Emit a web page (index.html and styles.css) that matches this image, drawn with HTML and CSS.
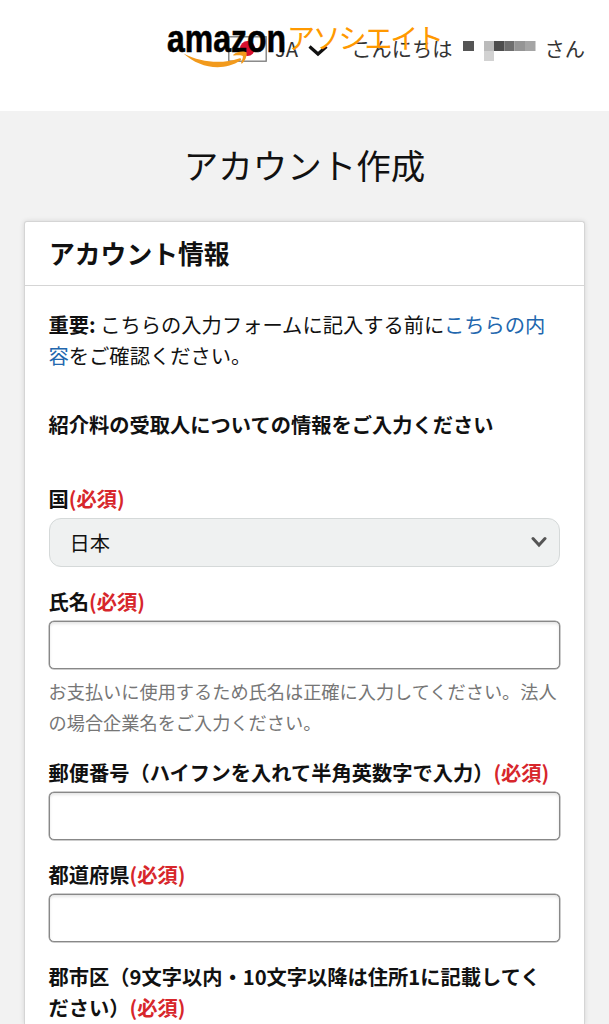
FILE: index.html
```
<!DOCTYPE html>
<html lang="ja">
<head>
    <meta charset="UTF-8">
    <meta name="viewport" content="width=device-width, initial-scale=1.0">
    <title>アカウント作成</title>
    <link rel="stylesheet" href="styles.css">
</head>
<body>
    <header class="header">
        <div class="user-menu">
            <svg class="flag" width="39" height="26" viewBox="0 0 39 26">
                <rect x="0.8" y="0.8" width="37.4" height="24.4" fill="#fff" stroke="#777" stroke-width="1.3"/>
                <circle cx="19.5" cy="12.5" r="7.5" fill="#d80f2f"/>
            </svg>
            <span class="lang">JA</span>
            <svg class="arrow" width="20" height="12" viewBox="0 0 20 12">
                <path d="M1.500 1.500l8.500 7.500 8.500-7.500" fill="none" stroke="#111" stroke-width="3.200"/>
            </svg>
            <span class="greeting">こんにちは</span>
            <svg class="masked" width="73" height="22" viewBox="0 0 73 22">
                <path fill="#555" d="M0 1h11v10H0z"/>
                <path fill="#bbb" d="M21 1h10v10H21z"/>
                <path fill="#d2d2d2" d="M21 11h10v10H21z"/>
                <path fill="#4d4d4d" d="M31 1h10.500v10H31z"/>
                <path fill="#6e6e6e" d="M41.500 1h10v10h-10z"/>
                <path fill="#959595" d="M51.500 1h11v10h-11z"/>
                <path fill="#a5a5a5" d="M62 1h10.500v10H62z"/>
            </svg>
            <span class="san">さん</span>
        </div>
        <a class="logo" href="#">
            <svg class="logo-mark" width="120" height="56" viewBox="0 0 120 56">
                <text class="logo-text" x="1" y="35.500" textLength="119" lengthAdjust="spacingAndGlyphs">amazon</text>
                <path fill="#f29a1c" d="M17.500 37.500C36 47 56 48 73 42.500c2-.8 3 .8 1.500 2C57 56 33 52 17.500 37.500z"/>
                <path fill="#f29a1c" d="M67.500 38.500c3-3 11-4 13-2 .8 3-1.500 9-4.500 11-1 .3-1-.4-.7-1.200 1-2.500 2-5 1.500-6.200-1-1.200-5-1-8.500-.6-1 .1-1.500-.4-.8-1z"/>
            </svg>
            <span class="logo-sub">アソシエイト</span>
        </a>
    </header>

    <main class="container">
        <h1>アカウント作成</h1>
        <form class="card">
            <h2>アカウント情報</h2>
            <div class="card-body">
                <p class="notice"><b>重要:</b> こちらの入力フォームに記入する前に<a href="#">こちらの内容</a>をご確認ください。</p>
                <h3>紹介料の受取人についての情報をご入力ください</h3>

                <div class="field">
                    <label for="country">国<span class="required">(必須)</span></label>
                    <div class="select-box">
                        <select id="country">
                            <option>日本</option>
                        </select>
                        <svg class="select-arrow" width="16" height="12" viewBox="0 0 16 12">
                            <path d="M2 2.500l6 6.500 6-6.500" fill="none" stroke="#555" stroke-width="3" stroke-linecap="round"/>
                        </svg>
                    </div>
                </div>
                <div class="field">
                    <label for="name">氏名<span class="required">(必須)</span></label>
                    <input type="text" id="name">
                    <p class="help">お支払いに使用するため氏名は正確に入力してください。法人の場合企業名をご入力ください。</p>
                </div>
                <div class="field">
                    <label for="zip">郵便番号（ハイフンを入れて半角英数字で入力）<span class="required">(必須)</span></label>
                    <input type="text" id="zip">
                </div>
                <div class="field">
                    <label for="pref">都道府県<span class="required">(必須)</span></label>
                    <input type="text" id="pref">
                </div>
                <div class="field">
                    <label for="city">郡市区（9文字以内・10文字以降は住所1に記載してください）<span class="required">(必須)</span></label>
                </div>
            </div>
        </form>
    </main>
</body>
</html>
```
FILE: styles.css
```
* {
    box-sizing: border-box;
}
body {
    height: 1024px;
    overflow: hidden;
    margin: 0;
    font-family: "Noto Sans CJK JP", sans-serif;
    font-size: 20.25px;
    line-height: 31px;
    color: #111;
    background-color: #f2f2f2;
}
h1, h2, h3, p {
    margin: 0;
}
a {
    color: #2267ae;
    text-decoration: none;
}
.header {
    position: relative;
    height: 111px;
    background-color: #fff;
}
.user-menu {
    display: flex;
    align-items: center;
    padding: 33px 0 0 228px;
    color: #333;
}
.flag {
    flex: none;
}
.lang {
    margin-left: 8px;
}
.arrow {
    flex: none;
    margin: 4px 0 0 10px;
}
.greeting {
    margin-left: 23px;
}
.masked {
    flex: none;
    margin: 4px 0 0 11px;
}
.san {
    margin-left: 8px;
}
.logo {
    position: absolute;
    top: 16px;
    left: 166px;
    display: flex;
}
.logo-text {
    font-family: "Liberation Sans", Arial, sans-serif;
    font-weight: bold;
    font-size: 39px;
    fill: #000;
    stroke: #000;
    stroke-width: 0.6px;
}
.logo-sub {
    margin: 6px 0 0 1px;
    font-size: 28px;
    font-weight: 400;
    letter-spacing: -2.2px;
    white-space: nowrap;
    color: #ff9900;
}
.container {
    padding: 28px 24px 0;
}
h1 {
    margin-bottom: 32px;
    font-size: 34.5px;
    font-weight: 400;
    line-height: 50px;
    text-align: center;
}
.card {
    height: 803px;
    background-color: #fff;
    border: 1px solid #d5d5d5;
    border-bottom: none;
    border-radius: 3px 3px 0 0;
    box-shadow: 0 0 5px rgba(0, 0, 0, 0.12);
}
h2 {
    height: 64px;
    padding: 0 24px;
    border-bottom: 1px solid #d5d5d5;
    font-size: 25.800px;
    line-height: 61px;
}
.card-body {
    padding: 23px 24px 0 23.5px;
}
.notice {
    font-size: 20.3px;
}
h3 {
    margin: 38px 0 43px;
    font-size: 20.25px;
}
.field {
    margin-bottom: 19px;
}
label {
    display: block;
    padding-right: 4px;
    margin-bottom: 4px;
    font-weight: bold;
}
.required {
    color: #d7262b;
}
input, select {
    display: block;
    width: 100%;
    height: 48px;
    padding: 0 20px;
    border: 1px solid #888;
    border-radius: 5px;
    font: inherit;
    color: inherit;
    background-color: #fff;
}
input {
    box-shadow: 0 0 0 0.5px #999, inset 0 2px 3px rgba(0, 0, 0, 0.1);
}
.select-box {
    position: relative;
}
select {
    height: 49px;
    appearance: none;
    border-color: #d5d9d9;
    border-radius: 12px;
    background-color: #eff1f1;
}
.select-arrow {
    position: absolute;
    top: 18px;
    right: 13px;
}
.help {
    padding-top: 7px;
    font-size: 18.200px;
    color: #767676;
}
```
